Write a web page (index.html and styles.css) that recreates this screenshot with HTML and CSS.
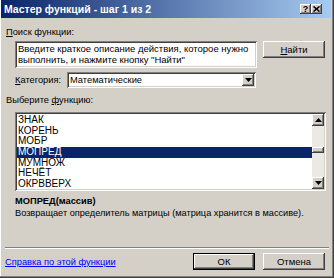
FILE: index.html
```html
<!DOCTYPE html>
<html lang="ru">
  <head>
    <meta charset="UTF-8" />
    <title>Мастер функций - шаг 1 из 2</title>
    <link rel="stylesheet" href="styles.css">
  </head>
  <body>
    <div class="window">
      <div class="titlebar">
        <span class="title">Мастер функций - шаг 1 из 2</span>
        <div class="caption-buttons">
          <span class="cap-btn">?</span>
          <span class="cap-btn">
            <svg width="7" height="6" viewBox="0 0 7 6"><path d="M0.5 0.5 L6.5 5.5 M6.5 0.5 L0.5 5.5" stroke="#000" stroke-width="1.6"/></svg>
          </span>
        </div>
      </div>

      <div class="body">
        <div class="label"><u>П</u>оиск функции:</div>
        <div class="search-row">
          <div class="field search-box">Введите краткое описание действия, которое нужно<br>выполнить, и нажмите кнопку "Найти"</div>
          <button class="btn find-btn"><u>Н</u>айти</button>
        </div>

        <div class="category-row">
          <span class="label category-label"><u>К</u>атегория:</span>
          <div class="field combo">
            <span class="combo-text">Математические</span>
            <span class="btn combo-arrow">
              <svg width="7" height="4" viewBox="0 0 7 4"><polygon points="0,0 7,0 3.5,4" fill="#000"/></svg>
            </span>
          </div>
        </div>

        <div class="label list-label">Выберите <u>ф</u>ункцию:</div>
        <div class="field listbox">
          <ul class="items">
            <li>ЗНАК</li>
            <li>КОРЕНЬ</li>
            <li>МОБР</li>
            <li class="selected">МОПРЕД</li>
            <li>МУМНОЖ</li>
            <li>НЕЧЁТ</li>
            <li>ОКРВВЕРХ</li>
          </ul>
          <div class="scrollbar">
            <span class="btn scroll-btn">
              <svg width="7" height="4" viewBox="0 0 7 4"><polygon points="0,4 7,4 3.5,0" fill="#000"/></svg>
            </span>
            <div class="track"><div class="btn thumb"></div></div>
            <span class="btn scroll-btn">
              <svg width="7" height="4" viewBox="0 0 7 4"><polygon points="0,0 7,0 3.5,4" fill="#000"/></svg>
            </span>
          </div>
        </div>

        <div class="signature">МОПРЕД(массив)</div>
        <div class="description">Возвращает определитель матрицы (матрица хранится в массиве).</div>
      </div>

      <div class="separator"></div>

      <div class="footer">
        <a class="help-link" href="#">Справка по этой функции</a>
        <div class="buttons">
          <button class="btn default-btn">ОК</button>
          <button class="btn">Отмена</button>
        </div>
      </div>
    </div>
  </body>
</html>
```

FILE: styles.css
```css
body {
  margin: 0;
  font-family: "Liberation Sans", Arial, sans-serif;
  font-size: 9.3px;
  color: #000;
  background: #d4d0c8;
}
.window {
  box-sizing: border-box;
  width: 334px;
  height: 278px;
  padding: 0 2px 1px 1px;
  background: #d4d0c8;
  border-right: 1px solid #404040;
  border-bottom: 1px solid #404040;
  box-shadow: inset -1px -1px #808080, inset 1px 0 #fff;
  display: flex;
  flex-direction: column;
}
.titlebar {
  height: 18px;
  display: flex;
  align-items: center;
  justify-content: space-between;
  padding: 0 9px 0 3px;
  background: linear-gradient(to right, #0a246a, #a6caf0);
  color: #fff;
}
.title {
  font-weight: bold;
  font-size: 10.5px;
}
.caption-buttons {
  display: flex;
}
.cap-btn {
  width: 11px;
  height: 10px;
  display: flex;
  align-items: center;
  justify-content: center;
  background: #d4d0c8;
  color: #000;
  font-weight: bold;
  font-size: 9px;
  box-shadow: inset -1px -1px #404040, inset 1px 1px #fff, inset -2px -2px #808080;
}
.btn {
  background: #d4d0c8;
  box-shadow: inset -1px -1px #404040, inset 1px 1px #fff, inset -2px -2px #808080;
}
button.btn {
  border: none;
  padding: 0;
  font-family: inherit;
  font-size: 9.5px;
  color: #000;
  width: 62px;
  height: 17px;
}
.field {
  background: #fff;
  box-shadow: inset 1px 1px #808080, inset -1px -1px #fff, inset 2px 2px #404040, inset -2px -2px #d4d0c8;
}
.label {
  line-height: 12px;
}
.body {
  padding: 8px 0 0 5px;
}
.search-row {
  display: flex;
  align-items: flex-start;
  margin: 3px 0 0 9px;
}
.search-box {
  box-sizing: border-box;
  width: 242px;
  height: 27px;
  padding: 3px 3px 0;
  font-size: 9.5px;
  line-height: 10.5px;
  white-space: nowrap;
  overflow: hidden;
}
.find-btn {
  margin-left: 6px;
}
.category-row {
  display: flex;
  align-items: center;
  margin: 4px 0 0 9px;
}
.category-label {
  width: 52px;
}
.combo {
  box-sizing: border-box;
  width: 189px;
  height: 16px;
  padding: 2px 2px 2px 3px;
  display: flex;
  align-items: center;
  justify-content: space-between;
}
.combo-arrow {
  width: 12px;
  height: 12px;
  display: flex;
  align-items: center;
  justify-content: center;
}
.list-label {
  margin-top: 6px;
}
.listbox {
  box-sizing: border-box;
  width: 311px;
  height: 79px;
  margin: 6px 0 0 9px;
  padding: 2px;
  display: flex;
}
.items {
  flex: 1;
  list-style: none;
  margin: 0;
  padding: 1px 0 0;
  font-size: 10px;
}
.items li {
  height: 10.67px;
  line-height: 10.67px;
  padding-left: 1px;
}
.items .selected {
  background: #0a246a;
  color: #fff;
}
.scrollbar {
  width: 12px;
  display: flex;
  flex-direction: column;
  background: #ebe9e4;
}
.scroll-btn {
  height: 12px;
  display: flex;
  align-items: center;
  justify-content: center;
}
.track {
  flex: 1;
}
.thumb {
  height: 6px;
  margin-top: 21px;
}
.signature {
  margin: 4px 0 0 9px;
  line-height: 12px;
  font-weight: bold;
}
.description {
  margin-left: 9px;
  line-height: 12px;
  font-size: 9.2px;
}
.separator {
  margin: 28px 2px 0 4px;
  height: 1px;
  border-top: 1px solid #808080;
  background: #fff;
}
.footer {
  display: flex;
  align-items: center;
  justify-content: space-between;
  margin-top: 4px;
  padding: 0 6px 0 4px;
}
.help-link {
  color: #0000ff;
}
.buttons {
  display: flex;
  gap: 8px;
}
.default-btn {
  box-shadow: inset 0 0 0 1px #000, inset -2px -2px #404040, inset 2px 2px #fff, inset -3px -3px #808080;
}
```
